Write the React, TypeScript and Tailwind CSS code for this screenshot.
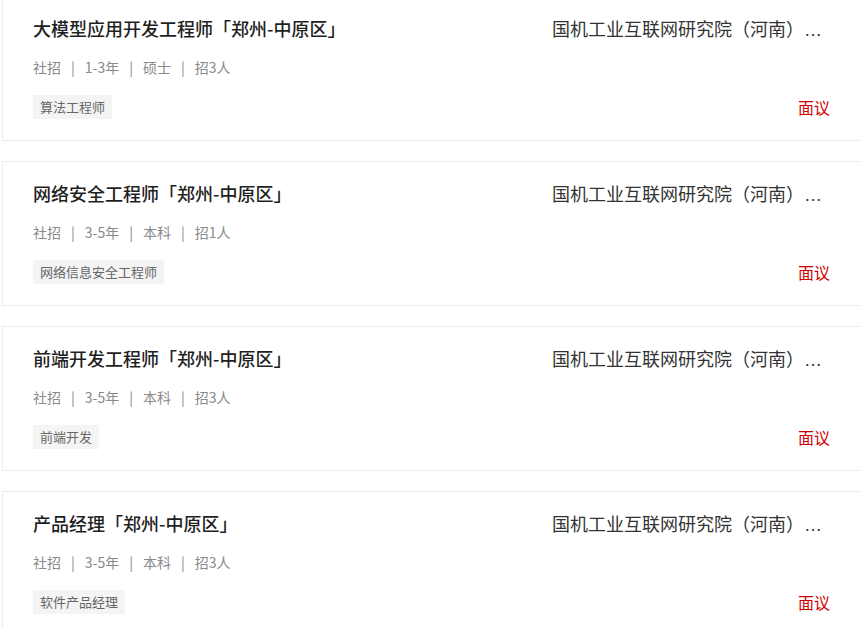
import React from "react";

type Job = {
  title: string;
  exp: string;
  edu: string;
  count: string;
  tag: string;
};

const jobs: Job[] = [
  { title: "大模型应用开发工程师「郑州-中原区」", exp: "1-3年", edu: "硕士", count: "招3人", tag: "算法工程师" },
  { title: "网络安全工程师「郑州-中原区」", exp: "3-5年", edu: "本科", count: "招1人", tag: "网络信息安全工程师" },
  { title: "前端开发工程师「郑州-中原区」", exp: "3-5年", edu: "本科", count: "招3人", tag: "前端开发" },
  { title: "产品经理「郑州-中原区」", exp: "3-5年", edu: "本科", count: "招3人", tag: "软件产品经理" },
];

function Sep() {
  return <span className="mx-[10px] text-[#888]">|</span>;
}

function Card({ job }: { job: Job }) {
  return (
    <div className="flex h-[145px] w-[859px] shrink-0 justify-between border border-[#ececec] bg-white pl-[30px] pr-[30px] pt-[18px]">
      <div className="flex min-w-0 flex-1 flex-col">
        <div className="text-[18px] font-medium leading-[26px] text-[#1f1f1f]">{job.title}</div>
        <div className="mt-[16px] flex items-center text-[14px] leading-[20px] text-[#8a8a8a]">
          <span>社招</span>
          <Sep />
          <span>{job.exp}</span>
          <Sep />
          <span>{job.edu}</span>
          <Sep />
          <span>{job.count}</span>
        </div>
        <div className="mt-[18px] flex">
          <span className="bg-[#f4f4f4] px-[7px] text-[13px] leading-[24px] text-[#666]">{job.tag}</span>
        </div>
      </div>
      <div className="flex w-[278px] shrink-0 flex-col items-end">
        <div
          className="mt-[2px] w-full truncate text-[18px] leading-[26px] text-[#333]"
          style={{ fontFamily: '"Liberation Sans", "Noto Sans CJK SC", sans-serif' }}
        >
          国机工业互联网研究院（河南）有限公司
        </div>
        <div className="mt-[52px] text-[16px] leading-[24px] text-[#d00000]">面议</div>
      </div>
    </div>
  );
}

export default function App() {
  return (
    <div
      className="h-[627px] w-[860px] overflow-hidden bg-white pl-[2px]"
      style={{ fontFamily: '"Noto Sans CJK SC", "Noto Sans", sans-serif' }}
    >
      <div className="-mt-[4px] flex flex-col gap-[20px]">
        {jobs.map((j, i) => (
          <Card key={i} job={j} />
        ))}
      </div>
    </div>
  );
}
